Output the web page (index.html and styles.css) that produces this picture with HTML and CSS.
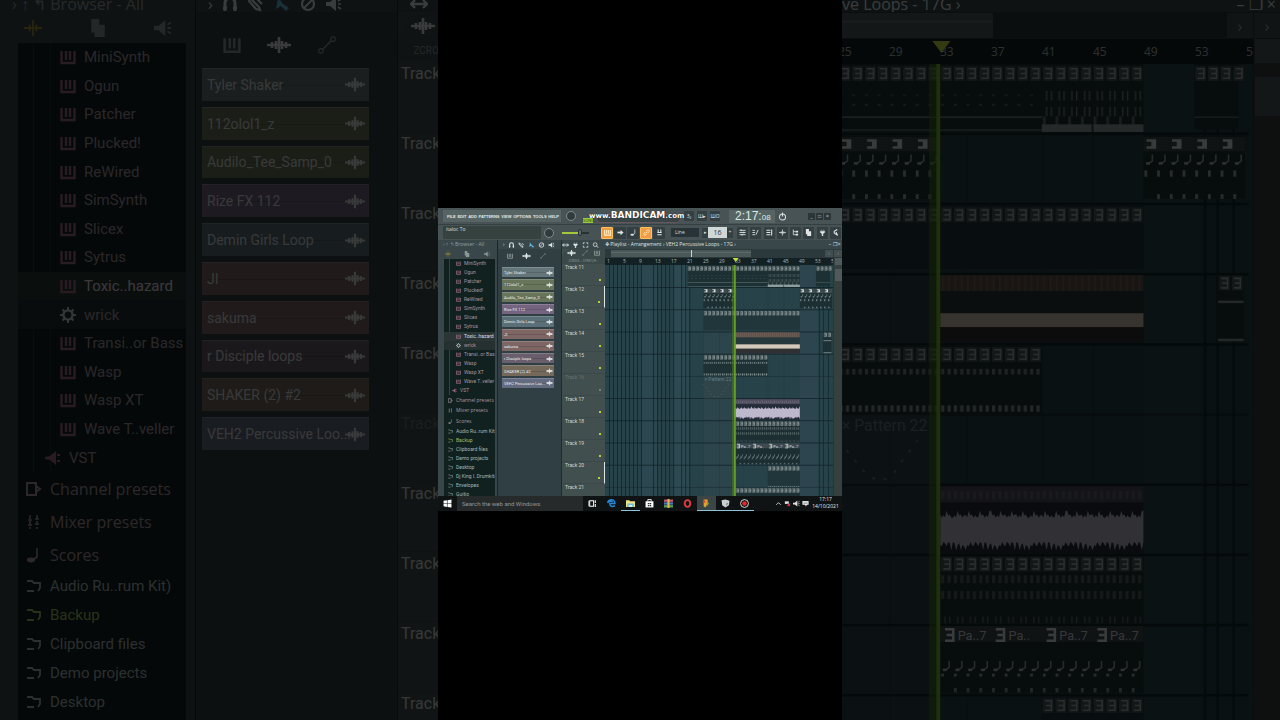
FILE: index.html
```html
<!DOCTYPE html>
<html lang="en">
<head>
<meta charset="utf-8">
<title>Playlist - Arrangement</title>
<link rel="stylesheet" href="styles.css">
</head>
<body>
<svg class="sprite" aria-hidden="true">
  <defs>
    <symbol id="i-keys" viewBox="0 0 16 16"><path d="M1.5 2v12h13V2M6 2v9M10 2v9" fill="none" stroke="currentColor" stroke-width="2.4"/></symbol>
    <symbol id="i-gear" viewBox="0 0 16 16"><circle cx="8" cy="8" r="4.6" fill="none" stroke="currentColor" stroke-width="2.4"/><path d="M8 0v3M8 13v3M0 8h3M13 8h3M2.5 2.5l2 2M11.5 11.5l2 2M2.5 13.5l2-2M11.5 4.5l2-2" stroke="currentColor" stroke-width="2"/></symbol>
    <symbol id="i-plug" viewBox="0 0 16 16"><path d="M0 7l5-1 6-5v14l-6-5-5-1z" fill="currentColor"/><path d="M12 5h3M12 11h3" stroke="currentColor" stroke-width="2"/></symbol>
    <symbol id="i-channel" viewBox="0 0 16 16"><path d="M1 2h9v12H1zM10 5l4 3-4 3" fill="none" stroke="currentColor" stroke-width="2"/></symbol>
    <symbol id="i-mixer" viewBox="0 0 16 16"><path d="M4 1v14M11 1v14" stroke="currentColor" stroke-width="1.6" stroke-dasharray="4 2"/><path d="M2 6h4M9 10h4M2 11h4M9 5h4" stroke="currentColor" stroke-width="1.6"/></symbol>
    <symbol id="i-note" viewBox="0 0 16 16"><path d="M11 1v9l-4 3" fill="none" stroke="currentColor" stroke-width="1.6"/><ellipse cx="5" cy="13" rx="4" ry="2.4" fill="currentColor"/></symbol>
    <symbol id="i-folder" viewBox="0 0 16 16"><path d="M1 3h5l2 2h6v5l-2 3M1 13h7" fill="none" stroke="currentColor" stroke-width="1.8"/></symbol>
    <symbol id="i-wave" viewBox="0 0 24 16"><path d="M0 8h24" stroke="currentColor" stroke-width="2.4"/><path d="M5 5v6M9 4v8M12 0v16M15 4v8M19 5v6" stroke="currentColor" stroke-width="2.6"/></symbol>
    <symbol id="i-line" viewBox="0 0 16 16"><path d="M4 12l8-8" stroke="currentColor" stroke-width="1.4"/><circle cx="2.6" cy="13.2" r="2" fill="none" stroke="currentColor"/><circle cx="13.4" cy="2.8" r="2" fill="none" stroke="currentColor"/></symbol>
    <symbol id="i-cross" viewBox="0 0 16 16"><path d="M0 8h16M8 1v14M5 5v6M11 5v6" stroke="currentColor" stroke-width="1.6"/></symbol>
    <symbol id="i-page" viewBox="0 0 16 16"><path d="M2 0h7v5h5v11H5V12H2z" fill="currentColor"/></symbol>
    <symbol id="i-speaker" viewBox="0 0 16 16"><path d="M0 6h4l6-5v14l-6-5H0z" fill="currentColor"/><path d="M12 5l3-2M12 8h3M12 11l3 2" stroke="currentColor" stroke-width="1.6"/></symbol>
    <symbol id="i-magnet" viewBox="0 0 16 16"><path d="M3 15V7a5 5 0 0 1 10 0v8M1 12h4M11 12h4" fill="none" stroke="currentColor" stroke-width="3"/></symbol>
    <symbol id="i-pencil" viewBox="0 0 16 16"><path d="M2 2l9 9 1 3-4-1-7-8zM9 3l5 5" fill="none" stroke="currentColor" stroke-width="2.2"/></symbol>
    <symbol id="i-brush" viewBox="0 0 16 16"><path d="M4 1l5 7 6 4-3 3-5-5-5 3z" fill="currentColor"/></symbol>
    <symbol id="i-no" viewBox="0 0 16 16"><circle cx="8" cy="8" r="6" fill="none" stroke="currentColor" stroke-width="2.2"/><path d="M4 12l8-8" stroke="currentColor" stroke-width="2"/></symbol>
    <symbol id="i-slip" viewBox="0 0 16 16"><path d="M0 8h16M4 4L0 8l4 4M12 4l4 4-4 4" fill="none" stroke="currentColor" stroke-width="2.4"/></symbol>
    <symbol id="i-select" viewBox="0 0 16 16"><path d="M6 2H2v4M10 2h4v4M6 14H2v-4M10 14h4v-4" fill="none" stroke="currentColor" stroke-width="2"/></symbol>
    <symbol id="i-zoom" viewBox="0 0 16 16"><circle cx="7" cy="7" r="5" fill="none" stroke="currentColor" stroke-width="2"/><path d="M11 11l4 4" stroke="currentColor" stroke-width="2.6"/></symbol>
    <symbol id="i-arrow" viewBox="0 0 16 16"><path d="M1 8h9" stroke="currentColor" stroke-width="4"/><path d="M8 2l7 6-7 6z" fill="currentColor"/></symbol>
    <symbol id="i-link" viewBox="0 0 16 16"><path d="M6 10l4-4M7 5l3-3a3 3 0 0 1 4 4l-3 3M9 11l-3 3a3 3 0 0 1-4-4l3-3" fill="none" stroke="currentColor" stroke-width="1.8"/></symbol>
    <symbol id="i-lamp" viewBox="0 0 16 16"><path d="M5 1v6M11 1v6M3 8h10M3 13h10" stroke="currentColor" stroke-width="2.4"/></symbol>
    <symbol id="i-list" viewBox="0 0 16 16"><path d="M1 3h14M1 8h14M1 13h14M5 1v4M11 6v4M7 11v4" stroke="currentColor" stroke-width="2"/></symbol>
    <symbol id="i-steps" viewBox="0 0 16 16"><path d="M1 3h6M1 8h6M1 13h6M9 13l5-11" fill="none" stroke="currentColor" stroke-width="2"/></symbol>
    <symbol id="i-rack" viewBox="0 0 16 16"><path d="M1 3h9M1 8h9M1 13h9M13 1v14" stroke="currentColor" stroke-width="2.4"/></symbol>
    <symbol id="i-tree" viewBox="0 0 16 16"><path d="M3 1v12h5M3 6h5" fill="none" stroke="currentColor" stroke-width="1.8"/><path d="M8 4h6v4H8zM8 11h6v4H8z" fill="currentColor"/></symbol>
    <symbol id="i-socket" viewBox="0 0 16 16"><path d="M5 1v4M11 1v4M3 5h10v3l-4 3v5H7v-5L3 8z" fill="currentColor" stroke="currentColor"/></symbol>
    <symbol id="i-cursor" viewBox="0 0 16 16"><path d="M12 1L5 5v4l7 5M9 7l4 8" fill="none" stroke="currentColor" stroke-width="2.4"/></symbol>
    <symbol id="i-power" viewBox="0 0 16 16"><circle cx="8" cy="9" r="5.4" fill="none" stroke="currentColor" stroke-width="1.8"/><path d="M8 1v7" stroke="currentColor" stroke-width="2"/></symbol>
    <symbol id="i-win" viewBox="0 0 16 16"><path d="M1 3l6-1v5.5H1zM8 2l7-1v6.5H8zM1 8.5h6V14l-6-1zM8 8.5h7V15l-7-1z" fill="#fff"/></symbol>
    <symbol id="i-task" viewBox="0 0 16 16"><path d="M3 3h7v10H3zM0 3v10M13 2v5M13 9v5" fill="none" stroke="#fff" stroke-width="1.8"/></symbol>
    <symbol id="i-edge" viewBox="0 0 16 16"><path d="M1 7C3 0 14-1 14 8H5c0 6 5 6 9 4M1 7c2-3 6-4 9-2" fill="none" stroke="#238ad8" stroke-width="2.6"/></symbol>
    <symbol id="i-files" viewBox="0 0 16 16"><path d="M0 2h6l1 2h9v10H0z" fill="#f1df86"/><path d="M2 8h12v6H2z" fill="#66c5dd"/><path d="M5 11h6v3H5z" fill="#f8f2c6"/></symbol>
    <symbol id="i-store" viewBox="0 0 16 16"><path d="M1 4h14v11H1z" fill="#fff"/><path d="M5 4V1h6v3" fill="none" stroke="#fff" stroke-width="1.5"/><path d="M5 7h2v2H5zM8 7h3v2H8zM5 10h2v3H5zM8 10h3v3H8z" fill="#222"/></symbol>
    <symbol id="i-rar" viewBox="0 0 16 16"><path d="M0 1h16v4H0z" fill="#c05a70"/><path d="M0 6h16v4H0z" fill="#4b78b8"/><path d="M0 11h16v4H0z" fill="#58a35a"/><path d="M6 0h4v16H6z" fill="#d6b64d"/></symbol>
    <symbol id="i-opera" viewBox="0 0 16 16"><ellipse cx="8" cy="8" rx="5" ry="6" fill="none" stroke="#e33a42" stroke-width="3.4"/></symbol>
    <symbol id="i-fl" viewBox="0 0 16 16"><path d="M3 1h7v7l-4 7-3-2z" fill="#e8a02c"/><path d="M9 6l4 1-5 7z" fill="#65a844"/><path d="M3 1l4 4-4 3z" fill="#d54f34"/></symbol>
    <symbol id="i-shield" viewBox="0 0 16 16"><path d="M1 2l7-1 7 2-1 8-6 4-6-4z" fill="#c9cfd2"/><path d="M10 6l3 2-4 5z" fill="#7d878c"/></symbol>
    <symbol id="i-rec" viewBox="0 0 16 16"><circle cx="8" cy="8" r="7" fill="#111" stroke="#e9e9e9" stroke-width="1.6"/><circle cx="8" cy="8" r="4" fill="#e8262c"/></symbol>
    <symbol id="i-up" viewBox="0 0 16 16"><path d="M3 11l5-5 5 5" fill="none" stroke="#ddd" stroke-width="2"/></symbol>
    <symbol id="i-net" viewBox="0 0 16 16"><path d="M2 3h9v6H2z" fill="#ddd"/><path d="M8 8l6 6M14 8l-6 6" stroke="#d8344e" stroke-width="2.4"/></symbol>
    <symbol id="i-msg" viewBox="0 0 16 16"><path d="M1 2h14v9h-4l-2 4-2-4H1z" fill="#f2f2f2"/><path d="M3 5h10M3 8h10" stroke="#555"/></symbol>

    <pattern id="p-ticks" x="703" width="4" height="30" patternUnits="userSpaceOnUse"><path d="M1.5 0v30M3 0v30" stroke="#93a09e" stroke-width=".4"/></pattern>
    <pattern id="p-dots" x="703" width="4" height="30" patternUnits="userSpaceOnUse"><path d="M.3 0h1v30h-1zM2.3 0h1v30h-1z" fill="#8b9798"/></pattern>
    <pattern id="p-beat" x="703" width="4" height="30" patternUnits="userSpaceOnUse"><path d="M.3 0h.9v30h-.9z" fill="#9da9aa"/></pattern>
    <pattern id="p-brown" x="703" width="2" height="30" patternUnits="userSpaceOnUse"><path d="M0 0h2v30H0z" fill="#5d514c"/><path d="M.5 0h.5v30H.5z" fill="#7d675b"/></pattern>
    <g id="three"><path d="M.3 .2h3.400v4.600H.3z" fill="#4b5a5d"/><path d="M1 1h2v3H1M1.300 2.500H3" fill="none" stroke="#a3aeae" stroke-width=".5"/></g>
    <g id="block"><path d="M0 0h8v4.500H0z" fill="#3d4b4e"/><path d="M1 .7h3v3H1v-.8h1.500V1.500H1z" fill="#dce2e2"/></g>
    <g id="quaver"><path d="M2.800 0v2L1.500 3" fill="none" stroke="#98a4a4" stroke-width=".5"/><path d="M.8 2.400h1.200v.8H.8z" fill="#b3bcbc"/></g>
    <g id="arrangement"></g>
  </defs>
</svg>

<main class="stage">
  <div class="backdrop" aria-hidden="true"><div class="workspace workspace--large" data-workspace="large"></div></div>
  <section class="portrait">
    <div class="screen">
      <header class="topbar">
        <nav class="menu"><a href="#">FILE</a><a href="#">EDIT</a><a href="#">ADD</a><a href="#">PATTERNS</a><a href="#">VIEW</a><a href="#">OPTIONS</a><a href="#">TOOLS</a><a href="#">HELP</a></nav>
        <span class="knob"></span>
        <div class="transport"><button class="song">SONG</button><span class="transport-pill"></span><strong class="watermark"><small>www.</small>BANDICAM<small>.com</small></strong></div>
        <button class="tool">3₂</button><button class="tool">Ш▸</button><button class="tool">ШО</button>
        <output class="time">2:17:<span>08</span></output>
        <svg class="ico power"><use href="#i-power"/></svg>
        <div class="window-buttons"><button>_</button><button>□</button><button>×</button></div>
      </header>
      <div class="toolbar">
        <div class="hint">italoc To</div>
        <span class="knob"></span>
        <input class="volume" type="range" value="70" aria-label="Volume">
        <div class="tools" id="tools-a"></div>
        <select class="snap" aria-label="Snap"><option>Line</option></select>
        <div class="pattern"><button>▸</button><input value="16" aria-label="Pattern"><button>+</button></div>
        <div class="tools tools--wide" id="tools-b"></div>
      </div>
      <div class="workspace" data-workspace="small"></div>
      <footer class="taskbar">
        <button class="start" aria-label="Start"><svg class="ico"><use href="#i-win"/></svg></button>
        <input class="search" placeholder="Search the web and Windows" aria-label="Search">
        <div class="apps" id="apps"></div>
        <div class="tray"><svg class="ico"><use href="#i-up"/></svg><svg class="ico"><use href="#i-net"/></svg><svg class="ico light"><use href="#i-speaker"/></svg><svg class="ico"><use href="#i-msg"/></svg></div>
        <time class="clock">17:17<br>14/10/2021</time>
      </footer>
    </div>
  </section>
</main>
<script src="app.js"></script>
</body>
</html>
```
FILE: styles.css
```css
* { box-sizing: border-box; }
body { margin: 0; background: #000; font-family: "Open Sans", "Noto Sans", sans-serif; }
button, input, select { margin: 0; padding: 0; border: 0; font: inherit; color: inherit; background: none; min-width: 0; }
a { color: inherit; text-decoration: none; }
.sprite { position: absolute; width: 0; height: 0; }
.stage { display: grid; grid-template-columns: 438fr 404fr 438fr; height: 100vh; overflow: hidden; }
.backdrop { grid-area: 1 / 1 / 2 / 4; min-height: 0; overflow: hidden; opacity: .26; display: grid; }
.portrait { grid-area: 1 / 2; z-index: 1; background: #000; display: flex; flex-direction: column; justify-content: center; min-width: 0; }
.screen { display: flex; flex-direction: column; background: #3b494c; color: #d7dede; font-size: 5px; line-height: 7px; overflow: hidden; }
.ico { width: 7px; height: 7px; flex: none; display: block; }

/* Top bars */
.topbar { display: flex; align-items: center; height: 16px; padding: 0 5px; background: #485355; gap: 3px; }
.menu { flex: none; display: flex; justify-content: space-between; align-items: center; width: 118px; height: 12px; padding: 0 2px 0 4px; background: #566463; font-family: "Liberation Sans", sans-serif; font-size: 4px; font-weight: bold; color: #e1e7e5; }
.knob { width: 10px; height: 10px; flex: none; border-radius: 50%; border: 1px solid #818c8c; background: #303b3e; margin: 0 2px; }
.transport { position: relative; flex: 1; height: 14px; display: flex; align-items: flex-end; gap: 3px; padding-left: 2px; }
.song { background: #9bcb3c; color: #26400c; font-size: 4px; line-height: 5px; width: 10px; height: 5px; overflow: hidden; }
.transport-pill { flex: 1; height: 9px; border-radius: 5px; background: #384446; border: 1px solid #68565b; }
.watermark { position: absolute; left: 8px; top: 0; font-family: "DejaVu Sans", sans-serif; font-size: 9px; line-height: 12px; color: #fff; text-shadow: 0 0 1px #000; white-space: nowrap; }
.watermark small { font-size: 7px; }
.tool { flex: none; width: 10px; height: 10px; background: #333f42; border-radius: 1px; display: grid; place-items: center; color: #e0e5e4; }
.time { flex: none; width: 46px; height: 13px; margin-left: 6px; padding-left: 6px; background: #566564; color: #dceae5; font-size: 12px; line-height: 13px; font-family: "Liberation Sans", sans-serif; white-space: nowrap; }
.time span { font-size: 8px; }
.power { width: 9px; height: 9px; }
.window-buttons { flex: none; display: flex; gap: 1px; margin: 0 6px 0 18px; }
.window-buttons button { width: 7px; height: 7px; background: #2c3638; line-height: 5px; }
.toolbar { display: flex; align-items: center; height: 16px; padding: 0 1px 0 5px; background: #465254; border-top: 1px solid #354043; gap: 2px; }
.hint { flex: none; width: 98px; height: 13px; padding-left: 3px; background: #35423f; line-height: 7px; }
.toolbar .knob { margin: 0 1px; }
.volume { appearance: none; flex: none; width: 27px; height: 2px; margin: 0 10px 0 5px; background: linear-gradient(90deg, #a5c83a 60%, #283234 60%); }
.volume::-webkit-slider-thumb { appearance: none; width: 4px; height: 7px; border-radius: 2px; background: #5f6d70; border: 1px solid #263032; }
.tools { display: flex; gap: 1px; flex: none; }
.tools .tool { width: 12px; height: 12px; }
.tool.is-on { background: #ee9d45; color: #fff1c6; border: 1px solid #ffc15b; }
.snap { appearance: none; flex: none; width: 28px; height: 9px; background: #273336; padding-left: 4px; margin-left: 4px; }
.pattern { flex: none; display: flex; align-items: center; width: 31px; margin-left: 1px; }
.pattern button { flex: none; width: 6px; height: 10px; background: #333f42; }
.pattern input { flex: 1; width: 18px; height: 11px; background: #cfd8d6; color: #334; text-align: center; font-size: 7px; }
.tools--wide { flex: 1; min-width: 0; justify-content: space-between; margin-left: 2px; }
.tools--wide .tool { width: 11px; }

/* Workspace: browser, clip picker, track headers and clip area */
.workspace { --ico: 5px; --head: 9px; --tabs: 10px; display: grid; grid-template-columns: 60px 64px 43px 1fr; height: 256px; background: #303f43; color: #bfc7c6; overflow: hidden; }
.workspace--large { --ico: 16px; --head: 12px; --tabs: 31px; grid-template-columns: 196px 202px 131px 1fr; height: auto; min-height: 0; font-size: 16px; line-height: 20px; }
.col { min-width: 0; min-height: 0; display: flex; flex-direction: column; overflow: hidden; }
.head { flex: none; display: flex; align-items: center; height: var(--head); gap: 3px; white-space: nowrap; background: #39474a; color: #dfe5e4; }
.head .ico { width: 7px; height: 6px; }
.head .ico-brush { color: #62b4dc; }
.workspace--large .head { align-items: flex-end; gap: 8px; padding-left: 12px; line-height: 16px; overflow: hidden; }
.workspace--large .head .ico { width: 18px; height: 16px; }
.head-browser { padding-left: 5px; color: #96a09f; }
.head-picker { padding-left: 5px; }
.tabs { flex: none; display: flex; align-items: center; justify-content: space-around; height: var(--tabs); background: #39474a; color: #8b9896; }
.tabs .ico { width: 6px; height: 6px; }
.workspace--large .tabs .ico { width: 18px; height: 18px; }
.tabs .gold { color: #a08c36; }
.tabs .lit { color: #dce4e2; width: 9px; }
.workspace--large .tabs .lit { width: 24px; }

.col-browser { background: #39474a; border-right: 1px solid #1a2527; }
.tree { flex: 1; min-height: 0; margin: 0 2px 0 6px; background: #102120; display: flex; flex-direction: column; overflow: hidden; }
.workspace--large .tree { margin: 0 9px 0 18px; }
.group { flex: none; display: grid; grid-auto-rows: 1fr; }
.group-plugins { height: 136px; font-family: Roboto, sans-serif; }
.group-presets { height: 32px; }
.group-folders { grid-auto-rows: 9px; }
.workspace--large .group-plugins { height: 429px; font-size: 15px; }
.workspace--large .group-presets { height: 99px; }
.workspace--large .group-folders { grid-auto-rows: 29px; font-size: 15px; }
.row { display: flex; align-items: center; gap: 3px; padding-left: 4px; white-space: nowrap; min-height: 0; }
.row .ico, .clip .ico { width: var(--ico); height: var(--ico); }
.group-plugins .row { padding-left: 12px; color: #a595a0; }
.group-plugins .row:last-child { padding-left: 8px; }
.group-plugins .row .ico { color: #996a7f; }
.group-presets .row { color: #ac98a1; }
.group-folders .row { color: #a6b7b4; }
.group-folders { font-family: Roboto, sans-serif; }
.group-folders .row.is-green { color: #a7bd62; }
.workspace--large .row { gap: 8px; padding-left: 8px; }
.workspace--large .group-plugins .row { padding-left: 42px; }
.workspace--large .group-plugins .row:last-child { padding-left: 27px; }
.group-plugins { background: linear-gradient(90deg, transparent 5px, #31443f 5px, #31443f 6px, transparent 6px); }
.workspace--large .group-plugins { background: linear-gradient(90deg, transparent 15px, #263734 15px, #263734 16px, transparent 16px, transparent 32px, #263734 32px, #263734 33px, transparent 33px); }
.group-plugins .row.is-open { background: #2a3635; color: #e4dfe4; }
.group-plugins .row.is-gear { background: #243130; }
.group-plugins .row.is-gear .ico { color: #c7d1d2; }

.col-picker { background: #303f44; border-right: 1px solid #202c2e; }
.col-picker .tabs { background: #313f43; height: 13px; justify-content: space-evenly; padding-right: 6px; }
.workspace--large .col-picker .tabs { height: 56px; padding-right: 35px; padding-top: 10px; }
.picker { display: grid; grid-auto-rows: 1fr; gap: 2px; height: 121px; margin: 5px 7px 0 4px; }
.workspace--large .picker { height: 382px; gap: 6px; margin: 0 28px 0 6px; }
.clip { display: flex; align-items: center; justify-content: space-between; border: 0; border-top: 1px solid rgba(255,255,255,.18); padding: 0 1px 0 2px; color: #f1f4f3; text-align: left; white-space: nowrap; width: 100%; font-family: Roboto, sans-serif; font-size: 4px; }
.clip .ico { width: 7px; height: 6px; }
.clip span { min-width: 0; flex: 1; background: linear-gradient(transparent 48%, rgba(0,0,0,.15) 48%, rgba(0,0,0,.15) 56%, transparent 56%); }
.workspace--large .clip { padding: 0 4px 0 5px; color: #d6dcdb; font-size: 14px; }
.workspace--large .clip .ico { width: 20px; height: 17px; }
.c-slate { background: #64767a; } .c-olive { background: #69755a; } .c-plum { background: #75647f; } .c-steel { background: #5b6f78; }
.c-rose { background: #7d6664; } .c-mauve { background: #695e6b; } .c-tan { background: #75695c; } .c-blue { background: #636b80; }

.col-tracks { background: #414f4f; }
.col-tracks .tabs { height: 15px; background: #3b4949; border-radius: 10px 0 0 0; padding: 0 2px; flex-wrap: wrap; font-size: 3px; line-height: 4px; }
.workspace--large .col-tracks .tabs { height: 50px; border-radius: 36px 0 0 0; font-size: 10px; line-height: 12px; }
.track { position: relative; flex: none; height: 22px; padding: 0 0 0 3px; border-bottom: 1px solid #39484a; color: #d0d8d5; }
.track::after { content: ""; position: absolute; right: 4px; bottom: 4px; width: 2px; height: 2px; background: #b5d337; }
.track.is-muted { color: #657371; }
.track.is-muted::after { background: #74827e; }
.track.is-live { border-right: 1px solid #e0e5e4; }
.col-tracks { font-family: Roboto, sans-serif; }
.workspace--large .track { height: 70px; padding: 2px 0 0 3px; }

.col-clips { min-width: 0; background: #28424a; display: grid; grid-template: var(--head) var(--nav) var(--ruler) 1fr / 1fr var(--scroll); --nav: 9px; --ruler: 7px; --scroll: 9px; }
.workspace--large .col-clips { --nav: 27px; --ruler: 25px; --scroll: 27px; }
.col-clips .head { grid-column: 1 / 3; }
.head .title { flex: 1; }
.nav { grid-column: 1 / 3; display: flex; background: #2c393c; padding: 1px 0; }
.nav-lead { flex: 6; }
.nav-thumb { flex: 135; background: linear-gradient(90deg, transparent 57%, #d5df86 57%, #d5df86 58%, transparent 58%), linear-gradient(#4b5858 30%, #59686a 30%, #59686a 42%, #4b5858 42%); }
.nav-rest { flex: 71; }
.nav button { width: calc(var(--scroll) - 1px); background: #414d4f; color: #a0a9a9; margin-left: 1px; }
.ruler { display: flex; background: #142124; color: #aeb8b7; overflow: hidden; padding-left: 2px; align-items: center; position: relative; }
.ruler span { flex: 0 0 16px; }
.workspace--large .ruler { padding-left: 8px; font-size: 12px; }
.workspace--large .ruler span { flex-basis: 51px; }
.workspace--large .ruler span:first-child { flex-basis: 46px; }
.marker { position: absolute; left: 56%; top: 0; width: 6px; height: 4px; background: #c5e141; clip-path: polygon(0 0, 100% 0, 50% 100%); }
.workspace--large .marker { width: 18px; height: 12px; top: 2px; margin-left: -2px; }
.arrange { width: 100%; height: 100%; display: block; min-height: 0; }
.vscroll { grid-column: 2; grid-row: 3 / 5; background: #36403f; border-left: 1px solid #273538; display: flex; flex-direction: column; gap: 4px; }
.vscroll i { display: block; background: #4e5a5b; margin-left: 1px; }
.vscroll i:first-child { height: 7px; }
.vscroll i:last-child { height: 12px; }
.workspace--large .vscroll { gap: 14px; }
.workspace--large .vscroll i:first-child { height: 24px; }
.workspace--large .vscroll i:last-child { height: 39px; }

/* Taskbar */
.taskbar { display: flex; align-items: stretch; height: 16px; background: #101314; border-bottom: 1px solid #000; color: #e8e8e8; }
.taskbar button { display: grid; place-items: center; width: 19px; flex: none; }
.taskbar .ico { width: 9px; height: 9px; }
.search { flex: none; width: 126px; background: #262a2b; padding-left: 5px; font-size: 6px; font-family: Roboto, sans-serif; }
.search::placeholder { color: #929898; opacity: 1; }
.apps { flex: 1; display: flex; }
.apps button { width: 19px; }
.apps button.is-active { background: #3b4546; }
.apps button.is-running { border-bottom: 1px solid #8ec4d9; }
.tray { flex: none; display: flex; align-items: center; gap: 2px; }
.tray .ico { width: 7px; height: 7px; }
.tray .light { color: #ddd; }
.clock { flex: none; width: 33px; text-align: center; line-height: 7px; }
```
FILE: app.js
```js
const icon = (name, cls = "") => `<svg class="ico ico-${name} ${cls}"><use href="#i-${name}"/></svg>`;
const row = (name, text, cls = "") => `<div class="row ${cls}">${icon(name)}<span>${text}</span></div>`;

const plugins = ["MiniSynth", "Ogun", "Patcher", "Plucked!", "ReWired", "SimSynth", "Slicex", "Sytrus", "Toxic..hazard", "wrick", "Transi..or Bass", "Wasp", "Wasp XT", "Wave T..veller"];
const presets = [["channel", "Channel presets"], ["mixer", "Mixer presets"], ["note", "Scores"]];
const folders = ["Audio Ru..rum Kit)", "Backup", "Clipboard files", "Demo projects", "Desktop", "Dj King l..Drumkits", "Envelopes", "Guitjo"];
const clips = [["Tyler Shaker", "slate"], ["112olol1_z", "olive"], ["Audilo_Tee_Samp_0", "olive"], ["Rize FX 112", "plum"], ["Demin Girls Loop", "steel"], ["JI", "rose"], ["sakuma", "rose"], ["r Disciple loops", "mauve"], ["SHAKER (2) #2", "tan"], ["VEH2 Percussive Loo...", "blue"]];

/* Draws every clip on the playlist; units are playlist pixels. */
function arrangement() {
  let s = "";
  const rect = (x, y, w, h, f, o = 1) => { s += `<rect x="${x}" y="${y}" width="${w}" height="${h}" fill="${f}" opacity="${o}"/>`; };
  const run = (id, x, end, y, step) => { for (; x < end; x += step) s += `<use href="#${id}" x="${x}" y="${y}"/>`; };
  rect(605, 250, 230, 260, "#28424a");
  rect(641, 250, 16, 260, "#2e4b53", .6);
  rect(673, 250, 16, 260, "#2e4b53", .8);
  rect(703, 250, 32, 260, "#30464c", .5);
  rect(799, 250, 18, 260, "#2e4650", .8);
  for (let x = 609; x < 690; x += 4) if (x !== 645 && x !== 649 && x !== 677) rect(x, 250, .8, 260, "#11252b");
  [703, 719, 743, 767, 783].forEach(x => rect(x, 250, .5, 260, "#203940", .6));
  [818, 822, 827].forEach(x => rect(x, 250, .8, 260, "#15272e"));
  for (let i = 1; i < 11; i++) rect(605, 266 + i * 22.1, 227, .8, "#11242a", i % 5 ? 1 : .5);

  rect(687, 266, 112, 21, "#1d3034"); rect(815, 266, 14, 21, "#1d3034");
  run("three", 687, 799, 267, 4); run("three", 815, 828, 267, 4);
  rect(687, 283, 80, .5, "#6a7c7d"); rect(687, 287, 80, .5, "#53686a"); rect(815, 283, 14, .5, "#53686a");
  rect(687, 276, 80, .6, "url(#p-beat)", .3); rect(687, 279, 80, .7, "url(#p-beat)", .4);
  rect(767, 275, 32, 3, "url(#p-ticks)", .8); rect(767, 280, 32, 3, "url(#p-ticks)", .8); rect(767, 283, 32, 3, "url(#p-beat)", .5);
  rect(767, 285.5, 32, 2.4, "#909d9e"); rect(782.6, 285.5, .7, 2.4, "#33484c");

  [[703, 735], [799, 831]].forEach(([a, b]) => {
    rect(a, 289, b - a, 20, "#1c3033");
    run("block", a, b, 289.5, 8); run("quaver", a, b, 295, 4);
    rect(a, 300, b - a, 2, "url(#p-beat)"); rect(a + 2, 307.5, b - a - 2, 1.5, "url(#p-beat)");
  });
  rect(703, 311, 96, 20, "#20363b"); run("three", 703, 799, 311.5, 4);

  rect(735, 333, 64, 21, "#27383d"); rect(735, 333, 64, 5, "url(#p-brown)");
  rect(735, 345, 64, 4.4, "#d4c9ba"); rect(735, 349.4, 64, 4.6, "#302f31");
  rect(822, 333, 8.5, 21, "#1d3034"); run("three", 822.5, 830, 333, 4);
  rect(822.5, 341, 8, .8, "#89979b"); rect(822.5, 353, 8, .8, "#89979b");

  rect(703, 355, 64, 22, "#1e3135"); run("three", 703, 767, 355.5, 4);
  rect(703, 362.5, 64, 1.8, "url(#p-dots)", .8); rect(703, 374, 64, 2, "url(#p-dots)");
  rect(703, 377, 32, 22, "#30464a", .7);
  s += `<text x="704" y="382" font-size="5" font-family="Roboto" fill="#667b80">× Pattern 22</text>`;
  s += `<path d="M703 385l4 5 5 6 4 2 4-2 4-6 4-5" fill="none" stroke="#5f7776" stroke-width=".6" stroke-dasharray="1 3"/>`;

  rect(735, 399.5, 64, 21, "#272d38"); rect(735, 399.5, 64, 5, "#4d4a5d"); rect(735, 401, 64, 2.5, "url(#p-dots)", .35);
  let top = "M735 407", low = "";
  for (let i = 0; i <= 128; i++) {
    top += `L${735 + i / 2} ${[408.4, 408.7, 407.2, 409.2, 408.6, 409.4][(i * 5 + (i >> 3)) % 6]}`;
    low = `L${735 + i / 2} ${[418, 417, 419.6, 418.4, 417.4][(i * 3 + (i >> 2)) % 5]}` + low;
  }
  s += `<path d="${top}${low}z" fill="#bdb8cc"/>`;

  rect(735, 421.5, 64, 21, "#1d2f33"); run("three", 735, 799, 421.5, 4);
  rect(735, 427.5, 64, 2.5, "url(#p-dots)", .5); rect(735, 432.5, 64, 2.5, "url(#p-dots)", .5); rect(735, 440.5, 64, 2, "url(#p-ticks)", .6);

  rect(735, 443.5, 64, 21, "#1c2e32"); rect(735, 443.5, 64, 5, "#3d4a50");
  [736.5, 752.5, 768.5, 784.5].forEach((x, i) => {
    s += `<path d="M${x} 444.500h2.600v3.600H${x}M${x + .5} 446.300h2" fill="none" stroke="#dfe5e5" stroke-width=".8"/>`;
    s += `<text x="${x + 4}" y="448" font-size="4" font-family="Roboto" fill="#cdd5d6">${["Pa..7", "Pa..", "Pa..7", "Pa..7"][i]}</text>`;
  });
  run("quaver", 735, 799, 454.5, 4); rect(735, 458.5, 64, .9, "url(#p-beat)"); rect(737, 463, 62, 1.4, "url(#p-beat)", .8);
  rect(767, 465.5, 32, 21, "#20363b"); run("three", 767, 799, 466, 4); rect(767, 486, 32, .8, "url(#p-dots)");
  run("three", 735, 799, 488, 4); rect(735, 493, 64, 4, "#1d3034");

  rect(731.5, 250, 3.3, 260, "#4b7d20", .6); rect(733.8, 250, 1.2, 260, "#79bd27");
  document.getElementById("arrangement").innerHTML = s;
}

function workspace(el) {
  const large = el.dataset.workspace === "large";
  const tracks = Array.from({ length: 11 }, (_, i) => `<div class="track ${i === 5 ? "is-muted" : ""} ${i === 1 || i === 9 ? "is-live" : ""}">Track ${i + 11}</div>`).join("");
  const marks = Array.from({ length: 15 }, (_, i) => `<span>${i === 14 ? "5" : i * 4 + 1}</span>`).join("");
  el.innerHTML = `
  <div class="col col-browser"><div class="head head-browser">› ↑ ↰ Browser - All</div>
    <div class="tabs">${icon("cross", "gold")}${icon("page")}${icon("speaker")}</div>
    <div class="tree"><div class="group group-plugins">${plugins.map((p, i) => row(i === 9 ? "gear" : "keys", p, i === 8 ? "is-open" : i === 9 ? "is-gear" : "")).join("")}${row("plug", "VST")}</div>
    <div class="group group-presets">${presets.map(p => row(...p)).join("")}</div>
    <div class="group group-folders">${folders.map((f, i) => row("folder", f, i === 1 ? "is-green" : "")).join("")}</div></div></div>
  <div class="col col-picker"><div class="head head-picker">› ${icon("magnet")} ${["pencil", "brush", "no", "speaker"].map(n => icon(n)).join("")}</div>
    <div class="tabs">${icon("keys")}${icon("wave", "lit")}${icon("line")}</div>
    <div class="picker">${clips.map(c => `<button class="clip c-${c[1]}"><span>${c[0]}</span>${icon("wave")}</button>`).join("")}</div></div>
  <div class="col col-tracks"><div class="head">${["slip", "socket", "select", "zoom"].map(n => icon(n)).join("")}</div>
    <div class="tabs">${icon("wave", "lit")}${icon("line")}${icon("keys")}<span>ZCROSS ○ STRETCH ○</span></div>${tracks}</div>
  <div class="col-clips"><div class="head"><span class="title">❖ Playlist - Arrangement › VEH2 Percussive Loops - 17G ›</span><span>– ❐ ×&nbsp;</span></div>
    <div class="nav"><span class="nav-lead"></span><span class="nav-thumb"></span><span class="nav-rest"></span><button>›</button><button>›</button></div>
    <div class="ruler">${marks}<i class="marker"></i></div>
    <svg class="arrange" viewBox="${large ? "605.5 266.5 228 207" : "605 266 228 230"}" preserveAspectRatio="xMinYMin slice"><use href="#arrangement"/></svg>
    <div class="vscroll"><i></i><i></i></div></div>`;
}

arrangement();
document.querySelectorAll("[data-workspace]").forEach(workspace);
const tools = (id, names, on = []) => { document.getElementById(id).innerHTML = names.map((n, i) => `<button class="tool ${on.includes(i) ? "is-on" : ""}" aria-label="${n}">${icon(n)}</button>`).join(""); };
tools("tools-a", ["keys", "arrow", "note", "link", "lamp"], [0, 3]);
tools("tools-b", ["list", "steps", "rack", "cross", "tree", "page", "socket", "cursor"]);
document.getElementById("apps").innerHTML = ["task", "edge", "files", "store", "rar", "opera", "fl", "shield", "rec"].map((n, i) => `<button class="${i === 6 ? "is-active" : ""} ${[2, 6, 7, 8].includes(i) ? "is-running" : ""}" aria-label="${n}">${icon(n)}</button>`).join("");
```
